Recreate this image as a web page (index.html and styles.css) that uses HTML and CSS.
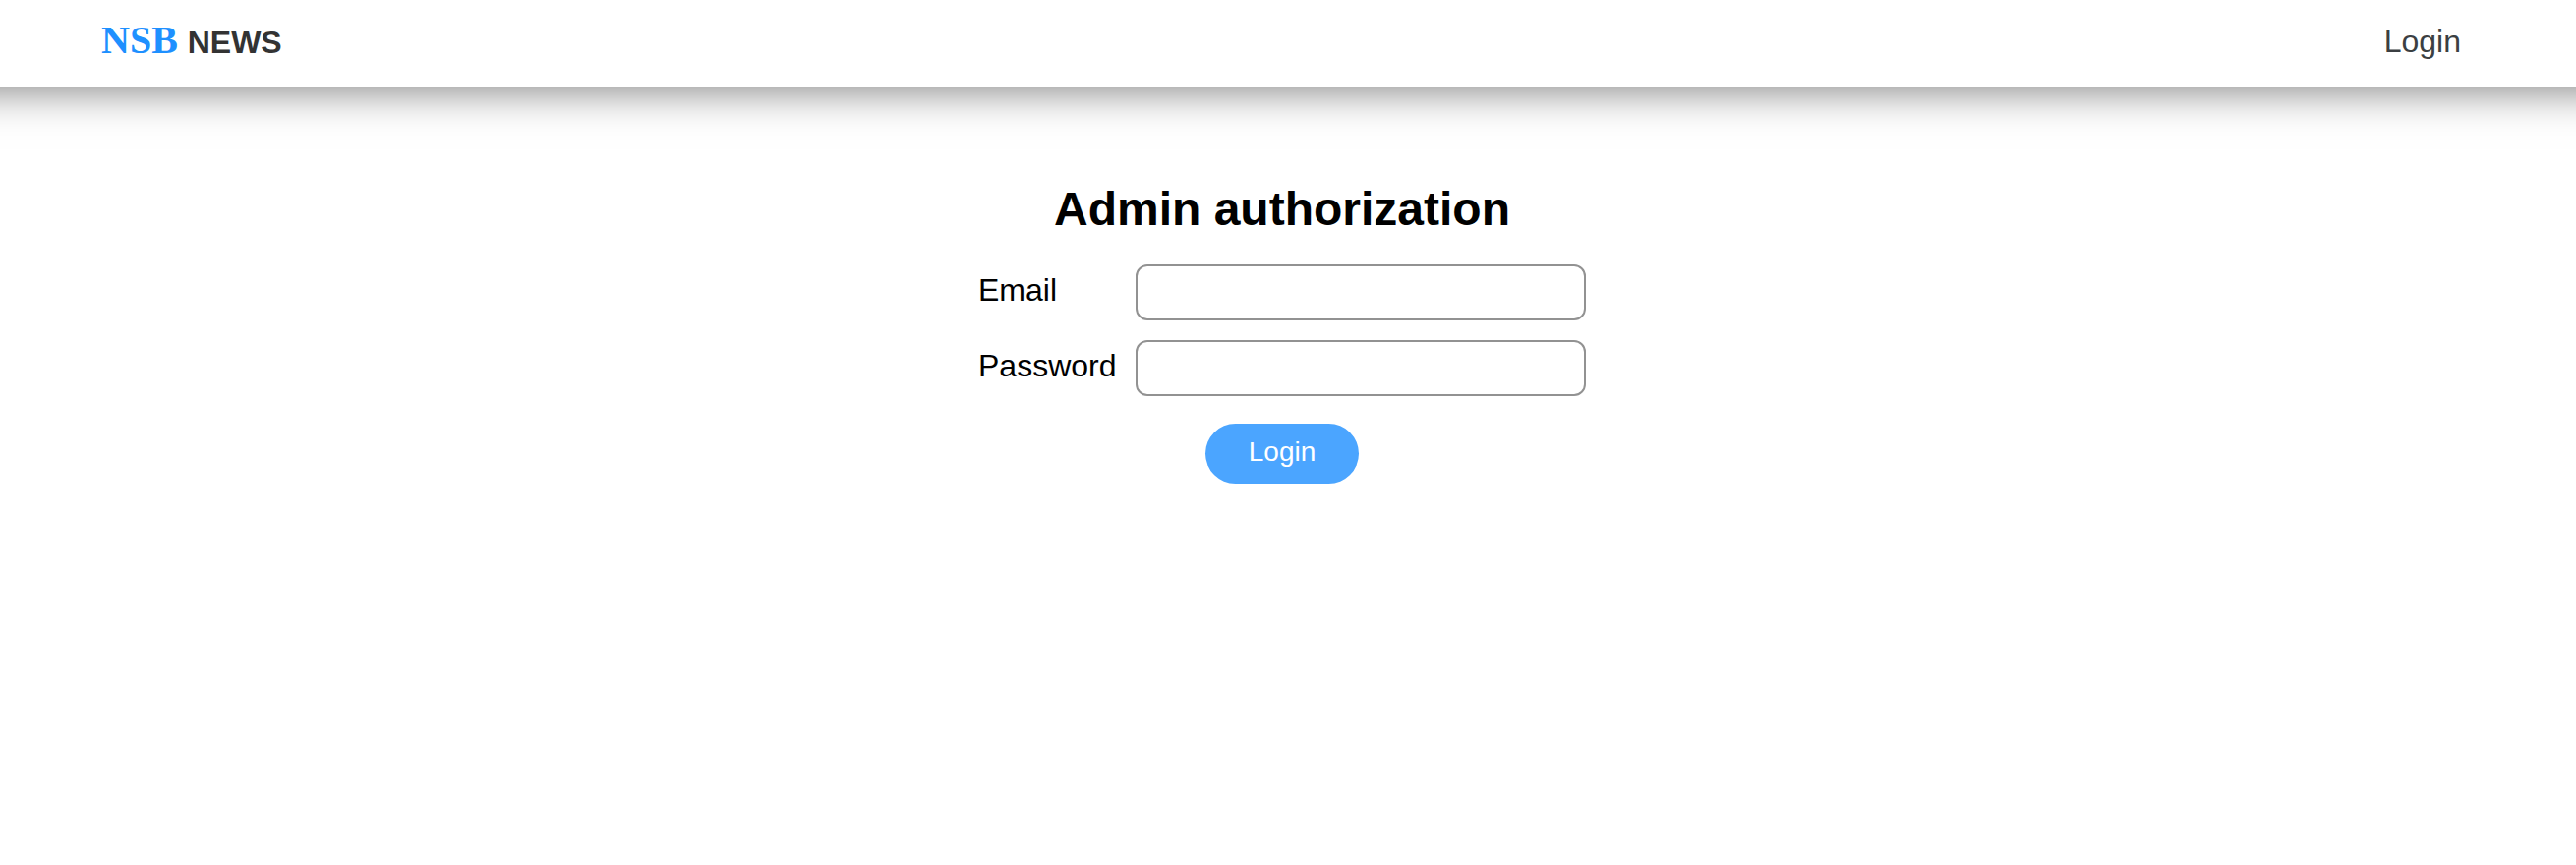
FILE: index.html
```html
<!DOCTYPE html>
<html lang="en">
<head>
<meta charset="utf-8">
<title>NSB NEWS</title>
<link rel="stylesheet" href="styles.css">
</head>
<body>
<header class="header">
  <a class="brand"><span class="brand-mark">NSB</span> NEWS</a>
  <a class="nav-link">Login</a>
</header>
<main class="main">
  <h1 class="title">Admin authorization</h1>
  <form class="form">
    <label class="label" for="email">Email</label>
    <input class="input" id="email" type="email">
    <label class="label" for="password">Password</label>
    <input class="input" id="password" type="password">
  </form>
  <button class="button" type="button">Login</button>
</main>
</body>
</html>
```
FILE: styles.css
```css
* { box-sizing: border-box; }
body {
  margin: 0;
  background: #fff;
  color: #000;
  font: 32px/36px "Liberation Sans", Arial, sans-serif;
}
.header {
  display: flex;
  justify-content: space-between;
  align-items: flex-start;
  height: 88px;
  padding: 17px 117px 0 103px;
  background: #fff;
  box-shadow: 0 -56px 40px 60px rgba(0, 0, 0, 0.5);
}
.brand { color: #333; font-weight: bold; line-height: 48px; }
.brand-mark {
  margin-right: 1px;
  color: #1e90ff;
  font-family: "Liberation Serif", "Times New Roman", serif;
  font-size: 40px;
}
.nav-link { color: #3b3f42; line-height: 50px; }
.main {
  display: flex;
  flex-direction: column;
  align-items: center;
  width: 2608px;
  padding-top: 97px;
}
.title { margin: 0; font-size: 48px; line-height: 56px; }
.form {
  display: grid;
  grid-template-columns: 140px 458px;
  gap: 20px;
  margin: 28px 0;
}
.label { padding-top: 8px; white-space: nowrap; }
.input {
  width: 458px;
  height: 57px;
  margin: 0;
  padding: 0 16px;
  border: 2px solid #929292;
  border-radius: 12px;
  background: #fff;
  font: inherit;
}
.button {
  width: 156px;
  height: 61px;
  padding: 0 0 4px;
  border: 0;
  border-radius: 31px;
  background: #4ba5ff;
  color: #fff;
  font: 28px/32px "Liberation Sans", Arial, sans-serif;
}
```
